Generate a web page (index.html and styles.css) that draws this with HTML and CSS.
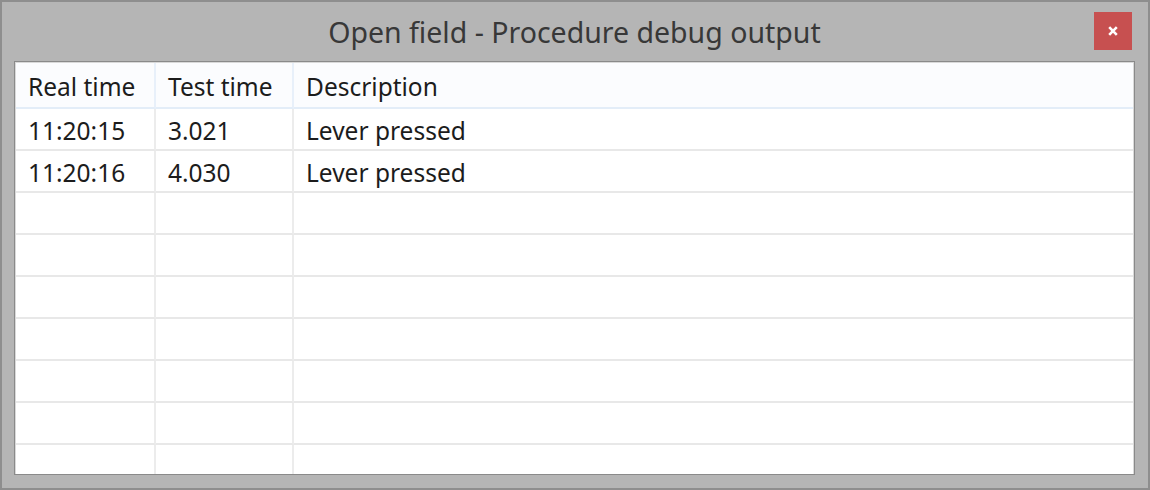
FILE: index.html
```html
<!DOCTYPE html>
<html>
<head>
<meta charset="utf-8">
<link rel="stylesheet" href="styles.css">
</head>
<body>
<div class="window">
  <div class="titlebar">
    <div class="spacer"></div>
    <div class="title">Open field - Procedure debug output</div>
    <div class="close"><svg width="10" height="10" viewBox="0 0 10 10"><path d="M1.2 1.2 L8.8 8.8 M8.8 1.2 L1.2 8.8" stroke="#fff" stroke-width="2.6" stroke-linecap="butt"/></svg></div>
  </div>
  <div class="panel">
    <div class="grid">
      <div class="cell head">Real time</div>
      <div class="cell head">Test time</div>
      <div class="cell head last">Description</div>

      <div class="cell">11:20:15</div>
      <div class="cell">3.021</div>
      <div class="cell last">Lever pressed</div>

      <div class="cell">11:20:16</div>
      <div class="cell">4.030</div>
      <div class="cell last">Lever pressed</div>

      <div class="cell"></div><div class="cell"></div><div class="cell last"></div>
      <div class="cell"></div><div class="cell"></div><div class="cell last"></div>
      <div class="cell"></div><div class="cell"></div><div class="cell last"></div>
      <div class="cell"></div><div class="cell"></div><div class="cell last"></div>
      <div class="cell"></div><div class="cell"></div><div class="cell last"></div>
      <div class="cell"></div><div class="cell"></div><div class="cell last"></div>
      <div class="cell"></div><div class="cell"></div><div class="cell last"></div>
    </div>
  </div>
</div>
</body>
</html>
```

FILE: styles.css
```css
html, body {
  margin: 0;
  padding: 0;
  background: #b4b4b4;
}
.window {
  width: 1150px;
  height: 490px;
  box-sizing: border-box;
  border: 2px solid #8e8e8e;
  background: #b5b5b5;
  display: flex;
  flex-direction: column;
  padding: 0 13px 13px 12px;
  font-family: "Noto Sans", "Open Sans", sans-serif;
  overflow: hidden;
}
.titlebar {
  height: 59px;
  flex: none;
  display: grid;
  grid-template-columns: 1fr auto 1fr;
  align-items: start;
}
.title {
  font-size: 28.5px;
  color: #383838;
  margin-top: 11px;
  line-height: 38px;
  white-space: nowrap;
}
.close {
  justify-self: end;
  margin-top: 10px;
  margin-right: 3px;
  width: 38px;
  height: 38px;
  background: #c75050;
  display: flex;
  align-items: center;
  justify-content: center;
}
.close svg {
  display: block;
}
.panel {
  flex: 1;
  border: 1px solid #8a8a8a;
  box-shadow: inset 0 0 0 1px #d9d9d9;
  background: #fff;
  padding: 1px;
  overflow: hidden;
}
.grid {
  display: grid;
  grid-template-columns: 140px 138px 1fr;
  grid-template-rows: 46px;
  grid-auto-rows: 42px;
  background: #fff;
}
.cell {
  box-sizing: border-box;
  border-right: 2px solid #ececec;
  border-bottom: 2px solid #e8e8e8;
  padding-left: 12px;
  font-size: 24.5px;
  color: #1c1c1c;
  line-height: 44px;
  white-space: nowrap;
  overflow: hidden;
}
.cell.last {
  border-right: none;
}
.cell.head {
  line-height: 48px;
  background: #fbfcfe;
  border-bottom-color: #e3edf8;
  border-right-color: #e8f0fa;
}
```
